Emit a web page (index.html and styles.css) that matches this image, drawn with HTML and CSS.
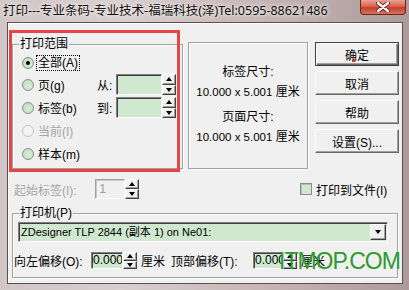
FILE: index.html
```html
<!DOCTYPE html>
<html>
<head>
<meta charset="utf-8">
<link rel="stylesheet" href="styles.css">
</head>
<body>
<div class="window">
  <div class="titlebar">
    <span class="title">打印---专业条码-专业技术-福瑞科技(泽)Tel:0595-88621486</span>
    <div class="close">
      <svg width="14" height="10" viewBox="0 0 14 10"><path d="M2 1 L12 9 M12 1 L2 9" stroke="#5a1a12" stroke-width="4" stroke-linecap="round"/><path d="M2 1 L12 9 M12 1 L2 9" stroke="#fff" stroke-width="2.4" stroke-linecap="round"/></svg>
    </div>
  </div>
  <div class="client">
    <div class="top">
      <div class="group range">
        <span class="glabel">打印范围</span>
        <div class="range-grid">
          <div class="radio r1"><span class="rb checked"></span><span class="focus">全部(A)</span></div>
          <div class="radio r2"><span class="rb"></span><span>页(g)</span></div>
          <div class="ft f2"><span class="ftl">从:</span><span class="spin"><span class="field big"></span><span class="arrows tall"><span class="up"></span><span class="down"></span></span></span></div>
          <div class="radio r3"><span class="rb"></span><span>标签(b)</span></div>
          <div class="ft f3"><span class="ftl">到:</span><span class="spin"><span class="field big"></span><span class="arrows tall"><span class="up"></span><span class="down"></span></span></span></div>
          <div class="radio r4 disabled"><span class="rb"></span><span>当前(I)</span></div>
          <div class="radio r5"><span class="rb"></span><span>样本(m)</span></div>
        </div>
      </div>
      <div class="info">
        <p>标签尺寸:</p>
        <p><span class="num">10.000 x 5.001</span> 厘米</p>
        <p class="gap">页面尺寸:</p>
        <p><span class="num">10.000 x 5.001</span> 厘米</p>
      </div>
      <div class="buttons">
        <div class="btn default">确定</div>
        <div class="btn">取消</div>
        <div class="btn">帮助</div>
        <div class="btn">设置(S)...</div>
      </div>
    </div>
    <div class="row2">
      <span class="startlabel">起始标签(I):</span>
      <span class="spin"><span class="field start">1</span><span class="arrows mid"><span class="up"></span><span class="down"></span></span></span>
      <span class="check"><span class="cb"></span><span>打印到文件(I)</span></span>
    </div>
    <div class="group printer">
      <span class="glabel">打印机(P)</span>
      <div class="combo"><span class="ctext">ZDesigner TLP 2844 (副本 1) on Ne01:</span><span class="drop"><span class="down"></span></span></div>
      <div class="offset">
        <span class="ol1">向左偏移(O):</span>
        <span class="spin"><span class="field off1">0.000</span><span class="arrows small"><span class="up"></span><span class="down"></span></span></span>
        <span class="unit">厘米</span>
        <span class="ol2">顶部偏移(T):</span>
        <span class="spin"><span class="field off2">0.000</span><span class="arrows small"><span class="up"></span><span class="down"></span></span></span>
        <span class="unit">厘米</span>
      </div>
    </div>
  </div>
  <div class="annot"></div>
  <div class="cursor"></div>
  <div class="watermark">ITMOP.COM</div>
</div>
</body>
</html>
```
FILE: styles.css
```css
* { box-sizing: border-box; }
html, body { margin: 0; padding: 0; }
body {
  width: 409px; height: 290px; overflow: hidden;
  font-family: "Liberation Sans", "Noto Sans CJK SC", sans-serif;
  font-size: 12px; color: #000;
  background: #c6b6b6;
}
.window {
  position: relative;
  width: 409px; height: 290px;
  display: flex; flex-direction: column;
  background: linear-gradient(to right, #d2c6c6 0%, #d8cece 30%, #c8b8b8 60%, #b8a6a6 85%, #ad9a9a 100%);
}
.titlebar {
  height: 22px; flex: none;
  display: flex; align-items: center;
  padding-left: 3px; padding-bottom: 1px;
}
.title {
  font-family: "Noto Sans", "Noto Sans CJK SC", sans-serif;
  font-size: 12.5px; line-height: 14px; color: #111;
  text-shadow: 0 0 6px #f2eeee, 0 0 3px #f2eeee;
}
.close {
  position: absolute; top: 0; left: 360px;
  width: 46px; height: 15px;
  border: 1px solid #6e241b; border-top: none;
  border-radius: 0 0 4px 4px;
  background: linear-gradient(to bottom, #e9a493 0%, #d9634f 45%, #c2402c 55%, #d6745f 100%);
  display: flex; align-items: center; justify-content: center;
}
.client {
  margin: 0 6px 6px 7px;
  height: 262px;
  border: 1px solid #5e5050;
  background: #f0f0f0;
  box-shadow: inset 1px 1px 0 #fff;
}
.top {
  display: flex; align-items: flex-start;
  padding-top: 19px;
}
.group {
  position: relative;
  border: 1px solid #a0a0a0;
  box-shadow: inset 1px 1px 0 #fff, 1px 1px 0 #fff;
}
.glabel {
  position: absolute; top: -8px; left: 6px;
  padding: 0 1px; background: #f0f0f0;
  line-height: 14px;
}
.range {
  margin-left: 4px; margin-top: 2px;
  width: 171px; height: 125px;
}
.range-grid {
  display: grid;
  grid-template-columns: 75px auto;
  grid-template-rows: 21px 23px 23px 23px 23px;
  padding: 7px 0 0 9px;
}
.radio { grid-column: 1; display: flex; align-items: center; gap: 4px; white-space: nowrap; }
.r1 { grid-row: 1; } .r2 { grid-row: 2; } .r3 { grid-row: 3; } .r4 { grid-row: 4; } .r5 { grid-row: 5; }
.f2 { grid-column: 2; grid-row: 2; } .f3 { grid-column: 2; grid-row: 3; }
.rb {
  width: 12px; height: 12px; border-radius: 50%;
  border: 1px solid #8c8c8c;
  background: radial-gradient(circle at 60% 60%, #d6ecd6 0%, #c8e2c8 60%, #b8d0b8 100%);
  position: relative; flex: none;
}
.rb.checked::after {
  content: ""; position: absolute; left: 3px; top: 3px;
  width: 4px; height: 4px; border-radius: 50%; background: #000;
}
.disabled { color: #a6a6a6; }
.disabled .rb { border-color: #c4c4c4; background: #f4f4f4; }
.focus { outline: 1px dotted #000; outline-offset: 0; padding: 0 1px; line-height: 14px; margin-left: -1px; }
.ft { display: flex; align-items: center; }
.ftl { width: 19px; }
.spin { display: flex; flex: none; }
.field {
  display: block;
  background: #cfe8cf;
  border: 1px solid; border-color: #808080 #fff #fff #808080;
  box-shadow: inset 1px 1px 0 #404040;
  overflow: hidden; white-space: nowrap;
}
.field.big { width: 46px; height: 21px; }
.arrows { display: flex; flex-direction: column; width: 14px; }
.arrows.tall { height: 21px; }
.arrows.mid { height: 20px; }
.arrows.small { height: 17px; }
.arrows > span, .drop {
  flex: 1;
  border: 1px solid; border-color: #fff #404040 #404040 #fff;
  box-shadow: inset -1px -1px 0 #a0a0a0;
  background: #f0f0f0;
  display: flex; align-items: center; justify-content: center;
}
.up::after {
  content: ""; display: block;
  border-left: 3.5px solid transparent; border-right: 3.5px solid transparent;
  border-bottom: 4px solid #000;
}
.down::after {
  content: ""; display: block;
  border-left: 3.5px solid transparent; border-right: 3.5px solid transparent;
  border-top: 4px solid #000;
}
.info {
  margin-left: 5px;
  width: 120px; height: 127px;
  border: 1px solid #a0a0a0;
  box-shadow: inset 1px 1px 0 #fff, 1px 1px 0 #fff;
  padding-top: 19px;
  text-align: center;
}
.info p { margin: 0; line-height: 20px; white-space: nowrap; }
.info .gap { margin-top: 5px; }
.num { font-size: 11.5px; }
.buttons {
  margin-left: 7px;
  display: flex; flex-direction: column; gap: 5px;
}
.btn {
  width: 84px; height: 24px;
  display: flex; align-items: center; justify-content: center;
  border: 1px solid; border-color: #fff #696969 #696969 #fff;
  box-shadow: inset -1px -1px 0 #a0a0a0;
  background: #f0f0f0;
}
.btn.default {
  border-color: #404040;
  box-shadow: inset 1px 1px 0 #fff, inset -1px -1px 0 #696969, inset -2px -2px 0 #a0a0a0;
}
.row2 {
  display: flex; align-items: center;
  height: 20px; margin-top: 10px;
  padding-left: 6px;
}
.startlabel { width: 81px; color: #a6a6a6; white-space: nowrap; }
.field.start {
  width: 30px; height: 20px;
  background: #f0f0f0;
  border-color: #a0a0a0 #fff #fff #a0a0a0;
  box-shadow: inset 1px 1px 0 #c8c8c8;
  color: #a0a0a0; font-size: 13px; line-height: 17px; padding-left: 3px;
}
.check { margin-left: 161px; display: flex; align-items: center; gap: 4px; white-space: nowrap; }
.cb {
  width: 12px; height: 12px;
  border: 1px solid #8c8c8c;
  background: #cfe8cf;
  box-shadow: inset 1px 1px 0 #b0c4b0;
}
.printer {
  margin: 14px 0 0 4px;
  width: 386px; height: 65px;
  padding-top: 8px;
}
.combo {
  margin-left: 5px;
  width: 370px; height: 20px;
  display: flex;
  border: 1px solid; border-color: #808080 #fff #fff #808080;
  box-shadow: inset 1px 1px 0 #404040;
  background: #cfe8cf;
}
.ctext { flex: 1; padding-left: 2px; font-size: 11px; line-height: 18px; white-space: nowrap; }
.drop { flex: none; width: 16px; margin: 1px 1px 1px 0; }
.offset {
  display: flex; align-items: center;
  height: 17px; margin-top: 10px;
  padding-left: 1px;
  white-space: nowrap;
}
.ol1 { width: 77px; }
.ol2 { width: 82px; }
.field.off1, .field.off2 {
  height: 17px;
  font-size: 12px; line-height: 15px; padding-left: 1px;
}
.field.off1 { width: 32px; }
.field.off2 { width: 30px; }
.unit { margin-left: 4px; width: 30px; }
.annot {
  position: absolute; left: 9px; top: 30px;
  width: 171px; height: 142px;
  border: 3px solid #e64545;
}
.cursor {
  position: absolute; left: 352px; top: 59px;
  width: 3px; height: 3px; background: #d83030;
}
.watermark {
  position: absolute; left: 279px; top: 250px;
  font-family: "Liberation Sans", sans-serif;
  font-size: 23px; line-height: 23px; letter-spacing: -1px;
  color: #2f9a2f;
}
```
